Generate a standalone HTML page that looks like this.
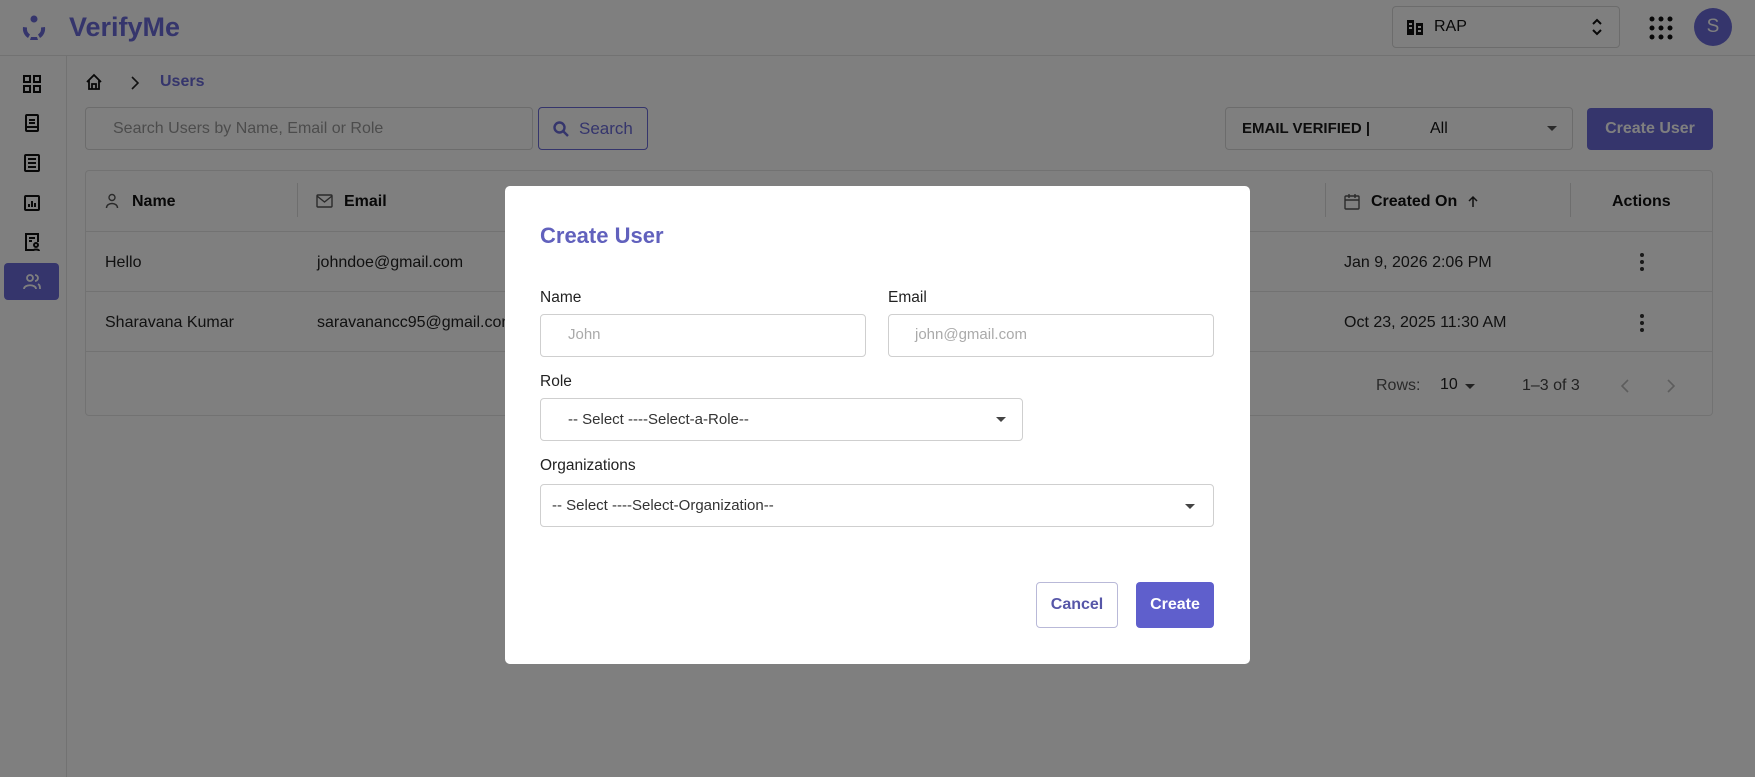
<!DOCTYPE html>
<html><head><meta charset="utf-8"><style>
*{box-sizing:border-box;margin:0;padding:0}
body{width:1755px;height:777px;overflow:hidden;background:#fff;font-family:"Liberation Sans",sans-serif;position:relative;color:#111}
.a{position:absolute}
.hdr{left:0;top:0;width:1755px;height:56px;border-bottom:1px solid #e4e4e4}
.side{left:0;top:56px;width:67px;height:721px;border-right:1px solid #e4e4e4}
.ic{position:absolute;left:22px;width:20px;height:20px}
.box{border:1px solid #d8d8d8;border-radius:4px}
.th{font-weight:bold;font-size:16px;color:#111}
.td{font-size:16px;color:#222}
.ov{left:0;top:0;width:1755px;height:777px;background:rgba(0,0,0,0.5)}
.m{left:505px;top:186px;width:745px;height:478px;background:#fff;border-radius:5px}
.lbl{font-size:15.5px;color:#222}
.in{border:1px solid #cfcfcf;border-radius:4px;background:#fff;font-size:15px}
</style></head><body>
<div class="a hdr"></div>
<svg class="a" style="left:20px;top:14px" width="28" height="28" viewBox="0 0 28 28"><g fill="#6a6ad8"><circle cx="14" cy="5" r="3.5"/><path d="M3 13 a11 11 0 0 0 5 11 l2-3.5 a7 7 0 0 1-3-7z"/><path d="M25 13 a11 11 0 0 1-5 11 l-2-3.5 a7 7 0 0 0 3-7z"/><path d="M10 26 h8 l-1-3 h-6z"/></g></svg>
<div class="a" style="left:69px;top:12px;font-size:27px;font-weight:bold;color:#6a6ad8">VerifyMe</div>
<div class="a box" style="left:1392px;top:6px;width:228px;height:42px"></div>
<svg class="a" style="left:1407px;top:18px" width="16" height="17" viewBox="0 0 16 17" fill="#111"><rect x="0" y="2" width="7" height="15"/><rect x="9" y="5" width="7" height="12"/><rect x="2" y="5" width="3" height="2" fill="#fff"/><rect x="2" y="9" width="3" height="2" fill="#fff"/><rect x="11" y="8" width="3" height="2" fill="#fff"/><rect x="11" y="12" width="3" height="2" fill="#fff"/></svg>
<div class="a" style="left:1434px;top:18px;font-size:16px">RAP</div>
<svg class="a" style="left:1591px;top:17px" width="12" height="20" viewBox="0 0 12 20" fill="none" stroke="#111" stroke-width="2"><path d="M2 7l4-4 4 4M2 13l4 4 4-4"/></svg>
<svg class="a" style="left:1649px;top:16px" width="24" height="24"><g fill="#111"><circle cx="3" cy="3" r="2.5"/><circle cx="12" cy="3" r="2.5"/><circle cx="21" cy="3" r="2.5"/><circle cx="3" cy="12" r="2.5"/><circle cx="12" cy="12" r="2.5"/><circle cx="21" cy="12" r="2.5"/><circle cx="3" cy="21" r="2.5"/><circle cx="12" cy="21" r="2.5"/><circle cx="21" cy="21" r="2.5"/></g></svg>
<div class="a" style="left:1694px;top:8px;width:38px;height:38px;border-radius:50%;background:#6a6ad8;color:#fff;font-size:19px;text-align:center;line-height:38px">S</div>

<div class="a side"></div>
<svg class="ic" style="top:74px" viewBox="0 0 20 20" fill="none" stroke="#111" stroke-width="2"><rect x="2" y="2" width="6" height="6"/><rect x="12" y="2" width="6" height="6"/><rect x="2" y="12" width="6" height="6"/><rect x="12" y="12" width="6" height="6"/></svg>
<svg class="ic" style="top:113px" viewBox="0 0 20 20" fill="none" stroke="#111" stroke-width="2"><rect x="4" y="2" width="12" height="16" rx="1"/><path d="M7 7h6M7 10h6M4 14h12"/></svg>
<svg class="ic" style="top:153px" viewBox="0 0 20 20" fill="none" stroke="#111" stroke-width="2"><rect x="3" y="2" width="14" height="16" rx="1"/><path d="M6 6h8M6 10h8M6 14h8"/></svg>
<svg class="ic" style="top:193px" viewBox="0 0 20 20" fill="none" stroke="#111" stroke-width="2"><rect x="3" y="3" width="14" height="14" rx="1"/><path d="M7 14v-3M10 14v-6M13 14v-4"/></svg>
<svg class="ic" style="top:232px" viewBox="0 0 20 20" fill="none" stroke="#111" stroke-width="2"><path d="M11 18H4V2h12v8"/><path d="M7 6h6M7 9h3"/><circle cx="14" cy="13" r="2"/><path d="M11 19c0-2 6-2 6 0"/></svg>
<div class="a" style="left:4px;top:263px;width:55px;height:37px;background:#6a6ad8;border-radius:4px"></div>
<svg class="a" style="left:22px;top:272px" width="20" height="20" viewBox="0 0 20 20" fill="none" stroke="#fff" stroke-width="1.8"><circle cx="8" cy="6" r="3"/><path d="M2 17c0-5 12-5 12 0M13 3a3 3 0 0 1 0 6M16 12c2 1 2 3 2 5"/></svg>

<svg class="a" style="left:85px;top:73px" width="18" height="18" viewBox="0 0 18 18" fill="none" stroke="#111" stroke-width="1.8"><path d="M2 9l7-7 7 7M4 7v9h10V7M7 16v-5h4v5"/></svg>
<svg class="a" style="left:130px;top:76px" width="10" height="14" viewBox="0 0 10 14" fill="none" stroke="#222" stroke-width="1.6"><path d="M2 1l6 6-6 6"/></svg>
<div class="a" style="left:160px;top:73px;font-size:16px;font-weight:bold;color:#6a6ad8">Users</div>

<div class="a box" style="left:85px;top:107px;width:448px;height:43px"></div>
<div class="a" style="left:113px;top:120px;font-size:16px;color:#999">Search Users by Name, Email or Role</div>
<div class="a box" style="left:538px;top:107px;width:110px;height:43px;border-color:#6a6ad8"></div>
<svg class="a" style="left:553px;top:121px" width="16" height="16" viewBox="0 0 16 16" fill="none" stroke="#6a6ad8" stroke-width="2.4"><circle cx="6.5" cy="6.5" r="5"/><path d="M10 10l5 5"/></svg>
<div class="a" style="left:579px;top:119px;font-size:17px;color:#6a6ad8">Search</div>

<div class="a box" style="left:1225px;top:107px;width:348px;height:43px"></div>
<div class="a" style="left:1242px;top:120px;font-size:15px;font-weight:bold;color:#1a1a1a">EMAIL VERIFIED |</div>
<div class="a" style="left:1430px;top:120px;font-size:16px;color:#111">All</div>
<div class="a" style="left:1547px;top:126px;border-left:5px solid transparent;border-right:5px solid transparent;border-top:5px solid #555"></div>
<div class="a" style="left:1587px;top:108px;width:126px;height:42px;background:#6a6ad8;border-radius:4px;color:#fff;font-weight:bold;font-size:16px;text-align:center;line-height:42px">Create User</div>

<div class="a box" style="left:85px;top:170px;width:1628px;height:246px;border-color:#e4e4e4"></div>
<div class="a" style="left:86px;top:231px;width:1626px;height:1px;background:#e4e4e4"></div>
<div class="a" style="left:86px;top:291px;width:1626px;height:1px;background:#e4e4e4"></div>
<div class="a" style="left:86px;top:351px;width:1626px;height:1px;background:#e4e4e4"></div>
<div class="a" style="left:297px;top:183px;width:1px;height:34px;background:#ddd"></div>
<div class="a" style="left:1325px;top:183px;width:1px;height:34px;background:#ddd"></div>
<div class="a" style="left:1570px;top:183px;width:1px;height:34px;background:#ddd"></div>
<svg class="a" style="left:105px;top:193px" width="14" height="16" viewBox="0 0 14 16" fill="none" stroke="#555" stroke-width="1.4"><circle cx="7" cy="4.5" r="3"/><path d="M1.5 15c0-6 11-6 11 0"/></svg>
<div class="a th" style="left:132px;top:193px">Name</div>
<svg class="a" style="left:316px;top:194px" width="17" height="14" viewBox="0 0 17 14" fill="none" stroke="#555" stroke-width="1.4"><rect x="1" y="1" width="15" height="12" rx="1"/><path d="M1 2l7.5 6L16 2"/></svg>
<div class="a th" style="left:344px;top:193px">Email</div>
<svg class="a" style="left:1344px;top:193px" width="16" height="17" viewBox="0 0 16 17" fill="none" stroke="#555" stroke-width="1.4"><rect x="1" y="3" width="14" height="13" rx="1"/><path d="M1 7h14M5 1v4M11 1v4"/></svg>
<div class="a th" style="left:1371px;top:193px">Created On</div>
<svg class="a" style="left:1468px;top:195px" width="10" height="13" viewBox="0 0 10 13" fill="none" stroke="#222" stroke-width="1.5"><path d="M5 12V2M1 6l4-4 4 4"/></svg>
<div class="a th" style="left:1612px;top:193px">Actions</div>
<div class="a td" style="left:105px;top:254px">Hello</div>
<div class="a td" style="left:317px;top:254px">johndoe@gmail.com</div>
<div class="a td" style="left:1344px;top:254px">Jan 9, 2026 2:06 PM</div>
<div class="a td" style="left:105px;top:314px">Sharavana Kumar</div>
<div class="a td" style="left:317px;top:314px">saravanancc95@gmail.com</div>
<div class="a td" style="left:1344px;top:314px">Oct 23, 2025 11:30 AM</div>
<svg class="a" style="left:1638px;top:252px" width="8" height="20"><g fill="#333"><circle cx="4" cy="3" r="2"/><circle cx="4" cy="10" r="2"/><circle cx="4" cy="17" r="2"/></g></svg>
<svg class="a" style="left:1638px;top:313px" width="8" height="20"><g fill="#333"><circle cx="4" cy="3" r="2"/><circle cx="4" cy="10" r="2"/><circle cx="4" cy="17" r="2"/></g></svg>
<div class="a" style="left:1376px;top:377px;font-size:16px;color:#555">Rows:</div>
<div class="a" style="left:1440px;top:376px;font-size:16px;color:#222">10</div>
<div class="a" style="left:1465px;top:384px;border-left:5px solid transparent;border-right:5px solid transparent;border-top:5px solid #444"></div>
<div class="a" style="left:1522px;top:377px;font-size:16px;color:#444">1–3 of 3</div>
<svg class="a" style="left:1620px;top:379px" width="10" height="14" viewBox="0 0 10 14" fill="none" stroke="#bbb" stroke-width="1.6"><path d="M8 1L2 7l6 6"/></svg>
<svg class="a" style="left:1666px;top:379px" width="10" height="14" viewBox="0 0 10 14" fill="none" stroke="#bbb" stroke-width="1.6"><path d="M2 1l6 6-6 6"/></svg>

<div class="a ov"></div>

<div class="a m"></div>
<div class="a" style="left:540px;top:223px;font-size:22px;font-weight:bold;color:#6161bd">Create User</div>
<div class="a lbl" style="left:540px;top:289px">Name</div>
<div class="a lbl" style="left:888px;top:289px">Email</div>
<div class="a in" style="left:540px;top:314px;width:326px;height:43px"></div>
<div class="a" style="left:568px;top:326px;font-size:15px;color:#aaa">John</div>
<div class="a in" style="left:888px;top:314px;width:326px;height:43px"></div>
<div class="a" style="left:915px;top:326px;font-size:15px;color:#aaa">john@gmail.com</div>
<div class="a lbl" style="left:540px;top:373px">Role</div>
<div class="a in" style="left:540px;top:398px;width:483px;height:43px"></div>
<div class="a" style="left:568px;top:411px;font-size:15px;color:#333">-- Select ----Select-a-Role--</div>
<div class="a" style="left:996px;top:417px;border-left:5px solid transparent;border-right:5px solid transparent;border-top:5px solid #444"></div>
<div class="a lbl" style="left:540px;top:457px">Organizations</div>
<div class="a in" style="left:540px;top:484px;width:674px;height:43px"></div>
<div class="a" style="left:552px;top:497px;font-size:15px;color:#333">-- Select ----Select-Organization--</div>
<div class="a" style="left:1185px;top:504px;border-left:5px solid transparent;border-right:5px solid transparent;border-top:5px solid #444"></div>
<div class="a" style="left:1036px;top:582px;width:82px;height:46px;border:1px solid #b9b9d8;border-radius:4px;text-align:center;line-height:44px;font-weight:bold;font-size:16px;color:#5656a8">Cancel</div>
<div class="a" style="left:1136px;top:582px;width:78px;height:46px;background:#5f5fcc;border-radius:4px;text-align:center;line-height:46px;font-weight:bold;font-size:16px;color:#fff">Create</div>
</body></html>
